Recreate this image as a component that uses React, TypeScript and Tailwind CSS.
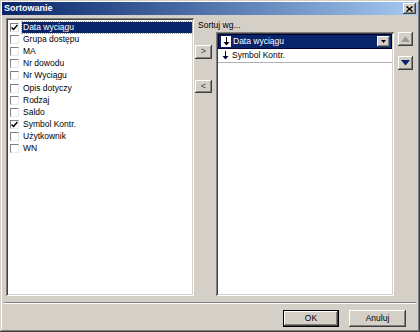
import React from 'react';

const font = { fontFamily: '"Liberation Sans", Arial, sans-serif' };

const fields = [
  { name: 'Data wyciągu', checked: true, selected: true },
  { name: 'Grupa dostępu', checked: false },
  { name: 'MA', checked: false },
  { name: 'Nr dowodu', checked: false },
  { name: 'Nr Wyciągu', checked: false },
  { name: 'Opis dotyczy', checked: false },
  { name: 'Rodzaj', checked: false },
  { name: 'Saldo', checked: false },
  { name: 'Symbol Kontr.', checked: true },
  { name: 'Użytkownik', checked: false },
  { name: 'WN', checked: false },
];

function CheckBox({ checked }: { checked: boolean }) {
  return (
    <div className="w-[9px] h-[9px] bg-white border border-t-[#808080] border-l-[#808080] border-r-[#e8e8e8] border-b-[#e8e8e8] flex items-center justify-center shrink-0">
      {checked && (
        <svg width="7" height="7" viewBox="0 0 7 7">
          <path d="M0.5 3.5 L2.5 5.5 L6.5 1" stroke="#000" strokeWidth="1.5" fill="none" />
        </svg>
      )}
    </div>
  );
}

function SortArrow({ color = '#000' }: { color?: string }) {
  return (
    <svg width="7" height="9" viewBox="0 0 7 9">
      <path d="M3.5 0 V8" stroke={color} strokeWidth="1" />
      <path d="M0.5 5 L3.5 8.5 L6.5 5 Z" fill={color} />
    </svg>
  );
}

function Btn({ children, className = '' }: { children?: React.ReactNode; className?: string }) {
  return (
    <div
      className={`bg-[#d4d0c8] flex items-center justify-center shadow-[inset_-1px_-1px_#404040,inset_1px_1px_#ffffff,inset_-2px_-2px_#808080] ${className}`}
    >
      {children}
    </div>
  );
}

export default function App() {
  return (
    <div
      className="w-[420px] h-[332px] bg-[#d4d0c8] p-[2px] text-[8.5px] text-black shadow-[inset_-1px_-1px_#404040,inset_1px_1px_#d4d0c8,inset_-2px_-2px_#808080,inset_2px_2px_#ffffff] flex flex-col"
      style={font}
    >
      {/* Title bar */}
      <div className="h-[13px] bg-gradient-to-r from-[#0a246a] to-[#a6caf0] flex items-center justify-between pl-[2px] pr-[2px]">
        <span className="text-white font-bold text-[9px] leading-none">Sortowanie</span>
        <Btn className="w-[13px] h-[11px]">
          <svg width="7" height="6" viewBox="0 0 7 6">
            <path d="M0.5 0.5 L6.5 5.5 M6.5 0.5 L0.5 5.5" stroke="#000" strokeWidth="1.5" />
          </svg>
        </Btn>
      </div>

      {/* Body */}
      <div className="flex mt-[3px] ml-[4px] h-[278px]">
        {/* Left list */}
        <div className="w-[188px] h-full bg-white shadow-[inset_1px_1px_#808080,inset_-1px_-1px_#ffffff,inset_2px_2px_#404040,inset_-2px_-2px_#d4d0c8] pt-[3px] pl-[4px] pr-[2px]">
          {fields.map((f) => (
            <div key={f.name} className="h-[12.2px] flex items-center gap-[3px]">
              <CheckBox checked={f.checked} />
              <span
                className={`flex-1 leading-[11px] h-[11px] pl-[1px] ${
                  f.selected ? 'bg-[#0a246a] text-white outline outline-1 outline-dotted outline-[#a0a0a0]' : ''
                }`}
              >
                {f.name}
              </span>
            </div>
          ))}
        </div>

        {/* Right part */}
        <div className="flex flex-col ml-[1px]">
          <div className="h-[14px] pl-[3px] flex items-center">Sortuj wg...</div>
          <div className="flex flex-1">
            <div className="w-[17px] flex flex-col pt-[13px]">
              <Btn className="h-[14px]">
                <span className="text-[9px] text-[#404040]">&gt;</span>
              </Btn>
              <Btn className="h-[13px] mt-[21px]">
                <span className="text-[9px] text-[#404040]">&lt;</span>
              </Btn>
            </div>

            <div className="w-[178px] ml-[4px] h-full bg-white shadow-[inset_1px_1px_#808080,inset_-1px_-1px_#ffffff,inset_2px_2px_#404040,inset_-2px_-2px_#d4d0c8] p-[2px]">
              <div className="h-[15px] bg-[#0a246a] border border-[#000033] flex items-center pl-[2px] pr-[1px]">
                <div className="w-[10px] h-[11px] bg-white flex items-center justify-center">
                  <SortArrow />
                </div>
                <span className="text-white ml-[2px] flex-1">Data wyciągu</span>
                <Btn className="w-[13px] h-[11px]">
                  <svg width="5" height="3" viewBox="0 0 5 3">
                    <path d="M0 0 H5 L2.5 3 Z" fill="#000" />
                  </svg>
                </Btn>
              </div>
              <div className="h-[14px] flex items-center pl-[3px] border-b border-[#b0b0b0]">
                <div className="w-[9px] flex items-center justify-center">
                  <SortArrow color="#000040" />
                </div>
                <span className="ml-[2px]">Symbol Kontr.</span>
              </div>
            </div>

            <div className="w-[15px] ml-[4px] flex flex-col">
              <Btn className="h-[14px]">
                <svg width="9" height="6" viewBox="0 0 9 6">
                  <path d="M0 6 L4.5 0.5 L9 6 Z" fill="#9c9a94" />
                </svg>
              </Btn>
              <Btn className="h-[14px] mt-[10px]">
                <svg width="9" height="6" viewBox="0 0 9 6">
                  <path d="M0 0 L4.5 5.5 L9 0 Z" fill="#0a246a" />
                </svg>
              </Btn>
            </div>
          </div>
        </div>
      </div>

      {/* Separator */}
      <div className="mt-[6px] mx-[2px] h-[2px] border-t border-[#808080] border-b border-b-white" />

      {/* Buttons */}
      <div className="flex justify-end gap-[10px] mt-[6px] pr-[12px]">
        <div className="w-[56px] h-[17px] border border-black">
          <Btn className="w-full h-full">OK</Btn>
        </div>
        <Btn className="w-[57px] h-[17px]">Anuluj</Btn>
      </div>
    </div>
  );
}
